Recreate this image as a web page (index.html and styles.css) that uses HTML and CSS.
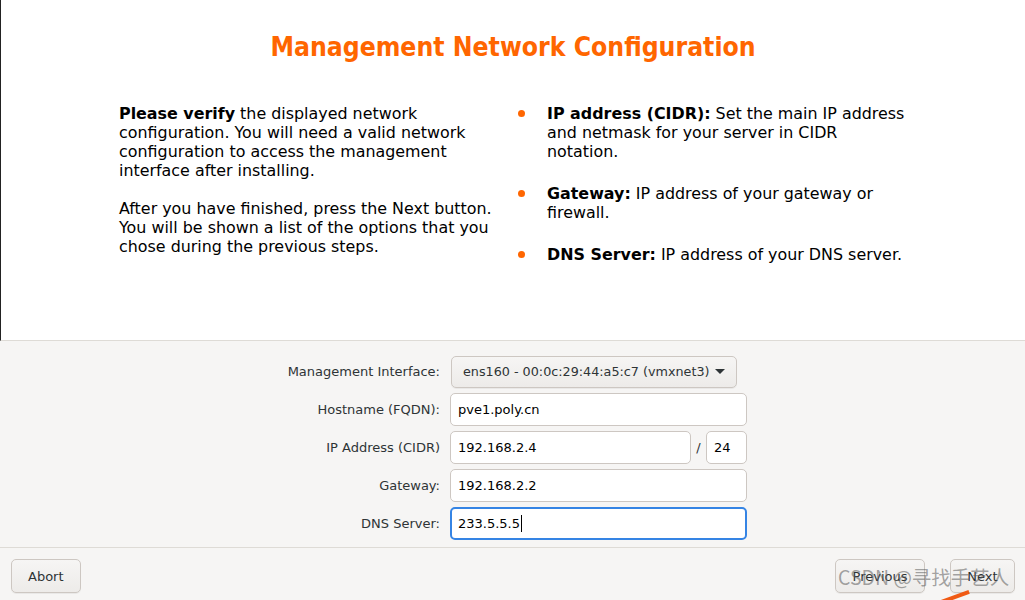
FILE: index.html
```html
<!DOCTYPE html>
<html>
<head>
  <title>Management Network Configuration</title>
  <link rel="stylesheet" href="styles.css">
</head>
<body>
  <div class="window">
    <div class="top">
      <h1 class="title">Management Network Configuration</h1>
      <div class="columns">
        <div class="col-left">
          <p><b>Please verify</b> the displayed network configuration. You will need a valid network configuration to access the management interface after installing.</p>
          <p>After you have finished, press the Next button. You will be shown a list of the options that you chose during the previous steps.</p>
        </div>
        <ul class="col-right">
          <li><b>IP address (CIDR):</b> Set the main IP address and netmask for your server in CIDR notation.</li>
          <li><b>Gateway:</b> IP address of your gateway or firewall.</li>
          <li><b>DNS Server:</b> IP address of your DNS server.</li>
        </ul>
      </div>
    </div>

    <div class="form">
      <div class="row">
        <label class="label">Management Interface:</label>
        <div class="combo">ens160 - 00:0c:29:44:a5:c7 (vmxnet3)<span class="arrow"></span></div>
      </div>
      <div class="row">
        <label class="label">Hostname (FQDN):</label>
        <div class="entry">pve1.poly.cn</div>
      </div>
      <div class="row">
        <label class="label">IP Address (CIDR)</label>
        <div class="entry ip">192.168.2.4</div>
        <span class="slash">/</span>
        <div class="entry mask">24</div>
      </div>
      <div class="row">
        <label class="label">Gateway:</label>
        <div class="entry">192.168.2.2</div>
      </div>
      <div class="row">
        <label class="label">DNS Server:</label>
        <div class="entry focus">233.5.5.5<span class="caret"></span></div>
      </div>
    </div>

    <div class="footer">
      <button class="btn">Abort</button>
      <div class="right-btns">
        <button class="btn prev">Previous</button>
        <button class="btn next">Next</button>
      </div>
      <div class="watermark">CSDN @寻找手艺人</div>
      <div class="pointer"></div>
    </div>
  </div>
</body>
</html>
```

FILE: styles.css
```css
html, body {
  margin: 0;
  padding: 0;
}

body {
  width: 1025px;
  height: 600px;
  overflow: hidden;
  background-color: #f6f5f4;
  font-family: "DejaVu Sans", sans-serif;
  color: #000;
}

.window {
  display: flex;
  flex-direction: column;
  height: 600px;
  position: relative;
}

.top {
  background-color: #fff;
  height: 341px;
  border-left: 1px solid #222;
  border-bottom: 1px solid #dedbd6;
  box-sizing: border-box;
}

.title {
  margin: 0;
  padding-top: 31px;
  text-align: center;
  font-family: "DejaVu Sans Condensed", "DejaVu Sans", sans-serif;
  font-stretch: condensed;
  font-size: 26.3px;
  font-weight: bold;
  color: #ff6600;
  line-height: 32px;
}

.columns {
  display: flex;
  padding-top: 41px;
  padding-left: 118px;
}

.col-left {
  width: 400px;
  font-size: 15.9px;
  line-height: 19px;
}

.col-left p {
  margin: 0 0 19px 0;
}

.col-right {
  margin: 0;
  padding: 0 0 0 28px;
  list-style: none;
  width: 365px;
  font-size: 15.9px;
  line-height: 19px;
}

.col-right li {
  position: relative;
  margin-bottom: 23px;
}

.col-right li::before {
  content: "";
  position: absolute;
  left: -29px;
  top: 6px;
  width: 7px;
  height: 7px;
  border-radius: 50%;
  background-color: #ff6600;
}

.form {
  display: flex;
  flex-direction: column;
  gap: 5px;
  padding-top: 14px;
  border-bottom: 1px solid #dedbd6;
  box-sizing: border-box;
  height: 207px;
  flex: none;
}

.row {
  display: flex;
  align-items: center;
  height: 33px;
}

.label {
  width: 450px;
  text-align: right;
  padding-right: 10px;
  box-sizing: border-box;
  font-size: 13px;
  color: #2e3436;
}

.combo {
  margin-left: 1px;
  width: 286px;
  height: 32px;
  box-sizing: border-box;
  border: 1px solid #cdc7c2;
  border-radius: 5px;
  background: linear-gradient(#f6f5f4, #edebe9);
  font-size: 12.75px;
  color: #2e3436;
  display: flex;
  align-items: center;
  padding-left: 11px;
  box-shadow: 0 1px 0 rgba(0, 0, 0, 0.05);
}

.arrow {
  margin-left: 6px;
  width: 0;
  height: 0;
  border-left: 5px solid transparent;
  border-right: 5px solid transparent;
  border-top: 5px solid #2e3436;
}

.entry {
  width: 297px;
  height: 33px;
  box-sizing: border-box;
  border: 1px solid #cdc7c2;
  border-radius: 5px;
  background-color: #fff;
  font-size: 13px;
  display: flex;
  align-items: center;
  padding-left: 7px;
}

.entry.ip {
  width: 241px;
}

.slash {
  width: 15px;
  text-align: center;
  font-size: 13px;
  color: #2e3436;
}

.entry.mask {
  width: 41px;
}

.entry.focus {
  border: 2px solid #3584e4;
  padding-left: 6px;
}

.caret {
  display: inline-block;
  width: 1px;
  height: 17px;
  background-color: #000;
  margin-left: 1px;
}

.footer {
  flex: 1;
  display: flex;
  justify-content: space-between;
  align-items: flex-start;
  padding: 11px 10px 0 11px;
  position: relative;
}

.right-btns {
  display: flex;
  gap: 25px;
}

.btn {
  font-family: "DejaVu Sans", sans-serif;
  font-size: 13px;
  color: #2e3436;
  height: 34px;
  padding: 0 16px;
  border: 1px solid #cdc7c2;
  border-radius: 5px;
  background: linear-gradient(#f6f5f4, #edebe9);
  box-shadow: 0 1px 0 rgba(0, 0, 0, 0.05);
}

.btn.prev {
  width: 90px;
}

.btn.next {
  width: 65px;
}

.watermark {
  position: absolute;
  left: 838px;
  top: 14px;
  font-family: "Noto Sans CJK SC", "DejaVu Sans", sans-serif;
  font-size: 19.5px;
  color: rgba(90, 90, 90, 0.55);
  white-space: nowrap;
}

.pointer {
  position: absolute;
  left: 940px;
  top: 47px;
  width: 30px;
  height: 4px;
  background-color: #f05a14;
  transform: rotate(-20deg);
}
```
